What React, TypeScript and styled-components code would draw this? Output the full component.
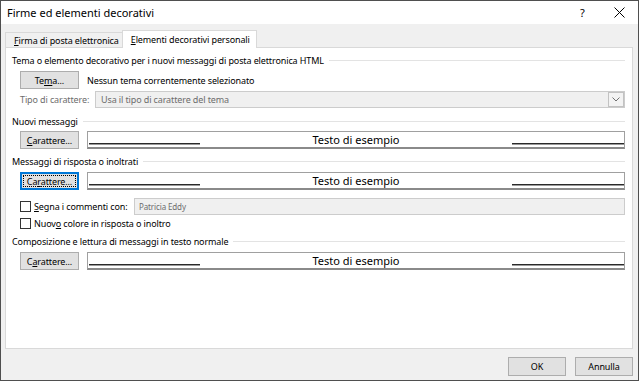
import React from "react";
import styled, { createGlobalStyle, css } from "styled-components";

const Global = createGlobalStyle`
  html, body { margin: 0; padding: 0; background: #fff; }
  body {
    font-family: "Noto Sans", "Segoe UI", sans-serif;
    font-size: 9px;
    letter-spacing: -0.12px;
    color: #000;
  }
  * { box-sizing: border-box; }
`;

const Window = styled.div`
  width: 639px;
  height: 381px;
  border: 1px solid #4f4f4f;
  background: #f0f0f0;
  display: flex;
  flex-direction: column;
  overflow: hidden;
`;

const TitleBar = styled.div`
  height: 23px;
  flex: none;
  background: #fff;
  display: flex;
  align-items: center;
  padding-left: 6px;
  font-size: 11px;
  letter-spacing: 0;
`;

const Title = styled.div`
  flex: 1;
`;

const TitleButton = styled.div`
  width: 37px;
  height: 23px;
  display: flex;
  align-items: center;
  justify-content: center;
  font-size: 11px;
`;

const Body = styled.div`
  flex: 1;
  display: flex;
  flex-direction: column;
  padding: 6px 4px 0 4px;
`;

const TabStrip = styled.div`
  display: flex;
  align-items: flex-end;
  height: 17px;
  position: relative;
  z-index: 1;
`;

const Tab = styled.div<{ $active?: boolean }>`
  display: flex;
  align-items: center;
  border: 1px solid #d9d9d9;
  border-bottom: none;
  ${(p) =>
    p.$active
      ? css`
          height: 18px;
          margin-bottom: -1px;
          background: #fff;
          padding: 0 6px 1px 8px;
        `
      : css`
          height: 15px;
          background: #f0f0f0;
          padding: 0 3px 0 8px;
          border-right: none;
        `}
`;

const Panel = styled.div`
  flex: 1;
  background: #fff;
  border: 1px solid #d9d9d9;
  margin-right: 1px;
  padding: 5px 7px 0 6px;
  display: flex;
  flex-direction: column;
`;

const SectionHeader = styled.div<{ $mt: number }>`
  display: flex;
  align-items: center;
  gap: 5px;
  height: 15px;
  margin-top: ${(p) => p.$mt}px;
  white-space: nowrap;
`;

const Rule = styled.div`
  flex: 1;
  height: 1px;
  background: #e3e3e3;
`;

const Row = styled.div<{ $mt: number; $h?: number }>`
  display: flex;
  align-items: center;
  gap: 8px;
  margin-left: 8px;
  margin-top: ${(p) => p.$mt}px;
  height: ${(p) => p.$h ?? 18}px;
  white-space: nowrap;
`;

const Button = styled.div<{ $focused?: boolean; $w?: number; $h?: number }>`
  position: relative;
  flex: none;
  width: ${(p) => p.$w ?? 59}px;
  height: ${(p) => p.$h ?? 18}px;
  background: #e1e1e1;
  border: 1px solid #adadad;
  display: flex;
  align-items: center;
  justify-content: center;
  ${(p) =>
    p.$focused &&
    css`
      border-color: #0078d7;
      box-shadow: inset 0 0 0 1px #0078d7;
      &::after {
        content: "";
        position: absolute;
        inset: 2px;
        border: 1px dotted #000;
      }
    `}
`;

const U = styled.span`
  text-decoration: underline;
`;

const DisabledLabel = styled.div`
  width: 67px;
  color: #6d6d6d;
`;

const Combo = styled.div`
  flex: 1;
  height: 17px;
  border: 1px solid #cccccc;
  background: #f0f0f0;
  display: flex;
  align-items: center;
  color: #6d6d6d;
  padding-left: 5px;
`;

const ComboText = styled.div`
  flex: 1;
`;

const ComboArrow = styled.div`
  width: 16px;
  height: 15px;
  border: 1px solid #c2c2c2;
  background: #f3f3f3;
  display: flex;
  align-items: center;
  justify-content: center;
`;

const Sample = styled.div`
  flex: 1;
  height: 18px;
  border: 1px solid #a0a0a0;
  border-bottom: 2px solid #8a8a8a;
  display: grid;
  grid-template-columns: 1fr auto 1fr;
  align-items: center;
  font-size: 11px;
  letter-spacing: 0;
`;

const SampleLine = styled.div<{ $side: "left" | "right" }>`
  height: 2px;
  border-top: 1px solid #2a2a2a;
  background: #9a9a9a;
  align-self: end;
  margin-bottom: 2px;
  ${(p) =>
    p.$side === "left"
      ? css`
          width: 111px;
          justify-self: start;
          margin-left: 1px;
        `
      : css`
          width: 112px;
          justify-self: end;
        `}
`;

const CheckRow = styled.div<{ $mt: number; $h: number }>`
  display: flex;
  align-items: center;
  margin-left: 8px;
  margin-top: ${(p) => p.$mt}px;
  height: ${(p) => p.$h}px;
  white-space: nowrap;
`;

const Check = styled.div`
  width: 11px;
  height: 11px;
  border: 1px solid #333;
  background: #fff;
  margin-right: 3px;
  flex: none;
`;

const CheckLabel = styled.div<{ $w?: number }>`
  ${(p) => p.$w && `width: ${p.$w}px;`}
`;

const TextInput = styled.div`
  flex: 1;
  height: 17px;
  border: 1px solid #cccccc;
  background: #f0f0f0;
  color: #6d6d6d;
  font-size: 8px;
  display: flex;
  align-items: center;
  padding-left: 4px;
`;

const Footer = styled.div`
  height: 31px;
  flex: none;
  display: flex;
  justify-content: flex-end;
  align-items: flex-start;
  gap: 9px;
  padding: 8px 1px 0 0;
`;

const SampleBox = () => (
  <Sample>
    <SampleLine $side="left" />
    <span>Testo di esempio</span>
    <SampleLine $side="right" />
  </Sample>
);

export default function App() {
  return (
    <>
      <Global />
      <Window>
        <TitleBar>
          <Title>Firme ed elementi decorativi</Title>
          <TitleButton>?</TitleButton>
          <TitleButton>
            <svg width="11" height="11" viewBox="0 0 11 11">
              <path d="M0.5 0.5 L10.5 10.5 M10.5 0.5 L0.5 10.5" stroke="#000" strokeWidth="1" fill="none" />
            </svg>
          </TitleButton>
        </TitleBar>
        <Body>
          <TabStrip>
            <Tab>
              <span>
                <U>F</U>irma di posta elettronica
              </span>
            </Tab>
            <Tab $active>
              <span>
                <U>E</U>lementi decorativi personali
              </span>
            </Tab>
          </TabStrip>
          <Panel>
            <SectionHeader $mt={0}>
              Tema o elemento decorativo per i nuovi messaggi di posta elettronica HTML
              <Rule />
            </SectionHeader>
            <Row $mt={3}>
              <Button>
                <span>
                  Te<U>m</U>a...
                </span>
              </Button>
              <span>Nessun tema correntemente selezionato</span>
            </Row>
            <Row $mt={2} $h={17}>
              <DisabledLabel>Tipo di carattere:</DisabledLabel>
              <Combo>
                <ComboText>Usa il tipo di carattere del tema</ComboText>
                <ComboArrow>
                  <svg width="8" height="5" viewBox="0 0 8 5">
                    <path d="M0.5 0.5 L4 4 L7.5 0.5" stroke="#707070" strokeWidth="1" fill="none" />
                  </svg>
                </ComboArrow>
              </Combo>
            </Row>
            <SectionHeader $mt={6}>
              Nuovi messaggi
              <Rule />
            </SectionHeader>
            <Row $mt={2}>
              <Button>
                <span>
                  <U>C</U>arattere...
                </span>
              </Button>
              <SampleBox />
            </Row>
            <SectionHeader $mt={5}>
              Messaggi di risposta o inoltrati
              <Rule />
            </SectionHeader>
            <Row $mt={3}>
              <Button $focused>
                <span>
                  Ca<U>r</U>attere...
                </span>
              </Button>
              <SampleBox />
            </Row>
            <CheckRow $mt={8} $h={17}>
              <Check />
              <CheckLabel $w={100}>
                <U>S</U>egna i commenti con:
              </CheckLabel>
              <TextInput>Patricia Eddy</TextInput>
            </CheckRow>
            <CheckRow $mt={1} $h={15}>
              <Check />
              <CheckLabel>
                Nuov<U>o</U> colore in risposta o inoltro
              </CheckLabel>
            </CheckRow>
            <SectionHeader $mt={3}>
              Composizione e lettura di messaggi in testo normale
              <Rule />
            </SectionHeader>
            <Row $mt={3}>
              <Button>
                <span>
                  C<U>a</U>rattere...
                </span>
              </Button>
              <SampleBox />
            </Row>
          </Panel>
          <Footer>
            <Button $w={58} $h={19}>OK</Button>
            <Button $w={58} $h={19}>Annulla</Button>
          </Footer>
        </Body>
      </Window>
    </>
  );
}
